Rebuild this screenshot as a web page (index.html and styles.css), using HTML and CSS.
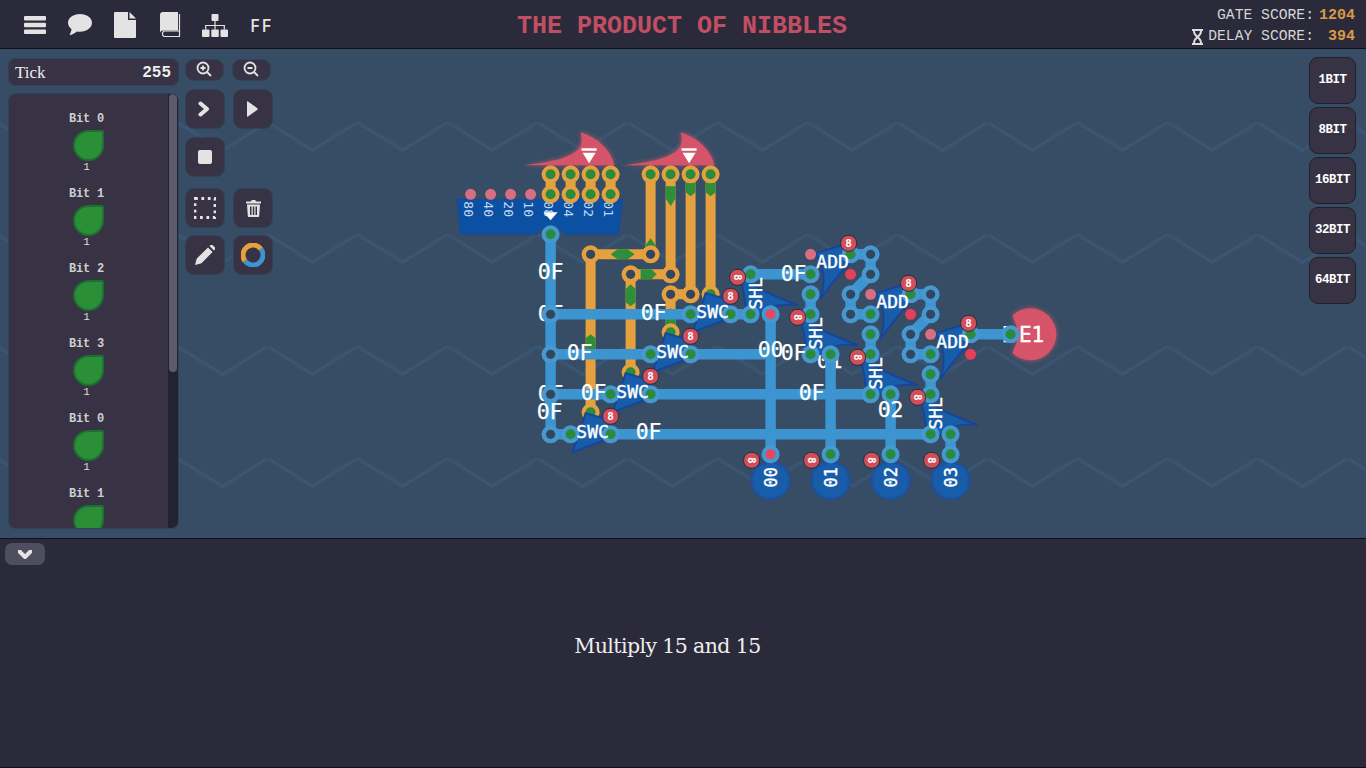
FILE: index.html
```html
<!DOCTYPE html>
<html lang="en">
<head>
<meta charset="utf-8">
<title>The Product of Nibbles</title>
<link rel="stylesheet" href="styles.css">
</head>
<body>
<header class="topbar">
  <nav class="menu">
    <svg class="ic ic-burger" viewBox="0 0 22 18"><rect y="0" width="22" height="4.4" rx="1"/><rect y="6.8" width="22" height="4.4" rx="1"/><rect y="13.6" width="22" height="4.4" rx="1"/></svg>
    <svg class="ic ic-chat" viewBox="0 0 24 22"><path d="M12 0C5.4 0 0 3.9 0 8.8c0 2.5 1.400 4.700 3.500 6.300-.2 2.400-1.200 4.400-2 5.900 2.700-.4 5.500-1.700 7.300-3.600 1 .2 2.100.3 3.200.3 6.600 0 12-3.900 12-8.900S18.600 0 12 0z"/></svg>
    <svg class="ic ic-file" viewBox="0 0 22 26"><path d="M1 0h13v8h8v17a1 1 0 0 1-1 1H1a1 1 0 0 1-1-1V1a1 1 0 0 1 1-1z"/><path d="M15.500 0 22 6.500h-6.500z"/></svg>
    <svg class="ic ic-book" viewBox="0 0 21 26"><path d="M3 0h15v18.500H3a3 3 0 0 0-3 2V3a3 3 0 0 1 3-3z"/><path class="ic-line" d="M19.500 2v22.500H4a3.200 3.200 0 0 1 0-5.500h15.500"/></svg>
    <svg class="ic ic-map" viewBox="0 0 26 23"><rect x="9.500" y="0" width="7" height="7" rx="1"/><rect x="0" y="15.500" width="7.500" height="7.500" rx="1"/><rect x="9.300" y="15.500" width="7.500" height="7.500" rx="1"/><rect x="18.500" y="15.500" width="7.500" height="7.500" rx="1"/><path class="ic-line" d="M13 7v8.500M3.700 15.500v-4h18.600v4"/></svg>
    <span class="ff">FF</span>
  </nav>
  <h1 class="title">THE PRODUCT OF NIBBLES</h1>
  <div class="scores">
    <div class="score-row"><span>GATE SCORE:</span><b class="score-val">1204</b></div>
    <div class="score-row">
      <svg class="ic-glass" viewBox="0 0 11 16"><path d="M0 0h11v2H10c0 3-1.500 4.500-3 6 1.500 1.500 3 3 3 6h1v2H0v-2h1c0-3 1.500-4.500 3-6C2.500 6.500 1 5 1 2H0z"/><path class="glass-in" d="M3 2h5c0 2-1 3-2.500 4.500C4 5 3 4 3 2zM3 14c0-2 1-3 2.500-4.500C7 11 8 12 8 14z"/></svg>
      <span>DELAY SCORE:</span><b class="score-val">&nbsp;394</b>
    </div>
  </div>
</header>

<main class="stage">
  <svg class="canvas" viewBox="-0.6 48.7 1366 489" aria-label="circuit">
    <defs>
      <pattern id="zig" patternUnits="userSpaceOnUse" width="90" height="112" x="-3" y="10">
        <path class="zig-line" d="M-45 28 0 0 45 28 90 0 135 28"/>
      </pattern>
      <filter id="glow" x="-30%" y="-30%" width="160%" height="160%"><feGaussianBlur stdDeviation="2.500"/></filter>
      <g id="o-h"><circle r="9" class="ring-o"/><circle r="4.600" class="hole"/></g>
      <g id="o-g"><circle r="9" class="ring-o"/><circle r="5" class="pin-g"/></g>
      <g id="b-h"><circle r="9" class="ring-b"/><circle r="4.600" class="hole"/></g>
      <g id="b-g"><circle r="9" class="ring-b"/><circle r="5" class="pin-g"/></g>
      <g id="b-r"><circle r="9" class="ring-b"/><circle r="5" class="pin-r"/></g>
      <g id="badge8"><rect x="-8" y="-8" width="16" height="16" rx="7.500" class="badge"/><text class="badge-t" y="3.500">8</text></g>
      <g id="badgei"><rect x="-8" y="-8" width="16" height="16" rx="7.500" class="badge"/><text class="badge-t" y="3.500" transform="rotate(90)">8</text></g>
      <path id="swc" class="gate" d="M-20 20-7-19 18-12 20 5Z"/>
      <path id="shl" class="gate" d="M-12-40Q0-27 47-9 20-12 12 0L-4 0Q-6-24-12-40Z"/>
      <path id="add" class="gate" d="M16-19-17-9Q-4 10-12 37 8 8 22-3Z"/>
      <path id="cone" class="pink" d="M0 33C28 30 50 26 58 14 60 8 59 4 58 0 76 6 88 18 92 33Z"/>
      <path id="out" class="gate soft" d="M-13-8A19 19 0 1 0 13-8L0-14Z"/>
    </defs>
    <rect x="-1" y="48" width="1368" height="491" fill="url(#zig)" class="bg"/>

    <!-- labels that lie under the wires -->
    <g class="lbl">
      <text x="550" y="321">0F</text><text x="550" y="401">0F</text><text x="829" y="368">01</text><text x="1014" y="342">E1</text>
    </g>

    <!-- orange wires -->
    <g class="w-o">
      <path d="M550 174v20M570 174v20M590 174v20M610 174v20"/>
      <path d="M650 174v80H590V412"/>
      <path d="M670 174v100H630V372"/>
      <path d="M690 174V294H670V332"/>
      <path d="M710 174V294"/>
    </g>
    <g class="w-g">
      <path d="M610 254 617 249H627L634 254 627 259H617Z"/>
      <path d="M640 269H651L656 274 651 279H640Z"/>
      <path d="M630 284 635 289V302L630 306 625 302V289Z"/>
      <path d="M665 186H675V198L670 206 665 198Z"/>
      <path d="M685 182H695V192L690 196 685 192Z"/>
      <path d="M705 182H715V192L710 196 705 192Z"/>
      <path d="M645 245 650 238 655 245V250H645Z"/>
      <path d="M665 312 670 308 675 312V328H665Z"/>
      <path d="M585 338 590 334 595 338V352H585Z"/>
    </g>

    <!-- blue wires -->
    <g class="w-b">
      <path d="M550 234V434H570"/>
      <path d="M550 314H690M550 354H650M550 394H610"/>
      <path d="M690 354H770M650 394H870M610 434H930"/>
      <path d="M730 314H750M770 314V454M830 354V454M890 394V454M950 434V454"/>
      <path d="M750 274H810M810 294V314"/>
      <path d="M850 254H870V274L850 294V314H870M870 334V354"/>
      <path d="M910 294H930V314L910 334V354H930M930 374V394"/>
      <path d="M970 334H1010"/>
    </g>

    <!-- splitter -->
    <path class="split" d="M456 199H622L618 234H564Q558 226 550 226 542 226 536 234H460Z"/>
    <g class="pink-dot"><circle cx="470" cy="194" r="5.500"/><circle cx="490" cy="194" r="5.500"/><circle cx="510" cy="194" r="5.500"/><circle cx="530" cy="194" r="5.500"/></g>
    <g class="split-t">
      <text transform="translate(463 201) rotate(90)">80</text>
      <text transform="translate(483 201) rotate(90)">40</text>
      <text transform="translate(503 201) rotate(90)">20</text>
      <text transform="translate(523 201) rotate(90)">10</text>
      <text transform="translate(543 201) rotate(90)">08</text>
      <text transform="translate(563 201) rotate(90)">04</text>
      <text transform="translate(583 201) rotate(90)">02</text>
      <text transform="translate(603 201) rotate(90)">01</text>
    </g>
    <path class="arrow" d="M543 212H557L550 220Z"/>

    <!-- pink input cones -->
    <use href="#cone" x="522" y="132" class="cone-glow"/><use href="#cone" x="622" y="132" class="cone-glow"/>
    <use href="#cone" x="522" y="132"/><use href="#cone" x="622" y="132"/>
    <g class="arrow"><path d="M581 148H596V150.500H581ZM582 152.500H595L588.500 163ZM681 148H696V150.500H681ZM682 152.500H695L688.500 163Z"/></g>

    <!-- pins that the gates cover in part -->
    <use href="#o-g" x="710" y="294"/><use href="#o-g" x="670" y="332"/><use href="#o-g" x="630" y="372"/><use href="#o-g" x="590" y="412"/>

    <!-- gates -->
    <use href="#swc" x="592" y="432"/><use href="#swc" x="632" y="392"/><use href="#swc" x="672" y="352"/><use href="#swc" x="712" y="312"/>
    <use href="#shl" x="750" y="314"/><use href="#shl" x="810" y="354"/><use href="#shl" x="870" y="394"/><use href="#shl" x="930" y="434"/>
    <use href="#add" x="832" y="262"/><use href="#add" x="892" y="302"/><use href="#add" x="952" y="342"/>
    <use href="#out" x="770" y="474"/><use href="#out" x="830" y="474"/><use href="#out" x="890" y="474"/><use href="#out" x="950" y="474"/>

    <!-- output -->
    <path class="pink cone-glow" d="M1012 315A26 26 0 1 1 1012 353L1019 334Z"/>
    <path class="pink" d="M1012 315A26 26 0 1 1 1012 353L1019 334Z"/>

    <!-- pins -->
    <use href="#o-g" x="550" y="174"/><use href="#o-g" x="570" y="174"/><use href="#o-g" x="590" y="174"/><use href="#o-g" x="610" y="174"/>
    <use href="#o-g" x="550" y="194"/><use href="#o-g" x="570" y="194"/><use href="#o-g" x="590" y="194"/><use href="#o-g" x="610" y="194"/>
    <use href="#o-g" x="650" y="174"/><use href="#o-g" x="670" y="174"/><use href="#o-g" x="690" y="174"/><use href="#o-g" x="710" y="174"/>
    <use href="#o-h" x="590" y="254"/><use href="#o-h" x="650" y="254"/><use href="#o-h" x="630" y="274"/><use href="#o-h" x="670" y="274"/><use href="#o-h" x="670" y="294"/><use href="#o-h" x="690" y="294"/>

    <use href="#b-g" x="550" y="234"/><use href="#b-h" x="550" y="314"/><use href="#b-h" x="550" y="354"/><use href="#b-h" x="550" y="394"/><use href="#b-h" x="550" y="434"/>
    <use href="#b-g" x="570" y="434"/><use href="#b-g" x="610" y="434"/><use href="#b-g" x="610" y="394"/><use href="#b-g" x="650" y="394"/><use href="#b-g" x="650" y="354"/><use href="#b-g" x="690" y="354"/><use href="#b-g" x="690" y="314"/><use href="#b-g" x="730" y="314"/>
    <use href="#b-g" x="750" y="314"/><use href="#b-r" x="770" y="314"/><use href="#b-g" x="750" y="274"/><use href="#b-g" x="810" y="274"/><use href="#b-g" x="810" y="294"/><use href="#b-g" x="810" y="314"/><use href="#b-g" x="810" y="354"/><use href="#b-g" x="830" y="354"/>
    <use href="#b-g" x="850" y="254"/><use href="#b-h" x="870" y="254"/><use href="#b-h" x="870" y="274"/><use href="#b-h" x="850" y="294"/><use href="#b-h" x="850" y="314"/><use href="#b-g" x="870" y="314"/><use href="#b-g" x="870" y="334"/><use href="#b-g" x="870" y="354"/><use href="#b-g" x="870" y="394"/><use href="#b-g" x="890" y="394"/>
    <use href="#b-g" x="910" y="294"/><use href="#b-h" x="930" y="294"/><use href="#b-h" x="930" y="314"/><use href="#b-h" x="910" y="334"/><use href="#b-h" x="910" y="354"/><use href="#b-g" x="930" y="354"/><use href="#b-g" x="930" y="374"/><use href="#b-g" x="930" y="394"/><use href="#b-g" x="930" y="434"/><use href="#b-g" x="950" y="434"/>
    <use href="#b-r" x="770" y="454"/><use href="#b-g" x="830" y="454"/><use href="#b-g" x="890" y="454"/><use href="#b-g" x="950" y="454"/>
    <use href="#b-g" x="970" y="334"/><use href="#b-g" x="1010" y="334"/>

    <!-- small input dots -->
    <g class="pink-dot"><circle cx="810" cy="254" r="5.500"/><circle cx="870" cy="294" r="5.500"/><circle cx="930" cy="334" r="5.500"/></g>
    <g class="red-dot"><circle cx="850" cy="274" r="5.500"/><circle cx="910" cy="314" r="5.500"/><circle cx="970" cy="354" r="5.500"/></g>

    <!-- labels on top -->
    <g class="lbl">
      <text x="550" y="279">0F</text><text x="653" y="320">0F</text><text x="579" y="360">0F</text><text x="770" y="357">00</text><text x="793" y="360">0F</text><text x="593" y="400">0F</text><text x="811" y="400">0F</text><text x="549" y="419">0F</text><text x="648" y="439">0F</text><text x="793" y="281">0F</text><text x="890" y="417">02</text>
    </g>
    <g class="gate-t">
      <text x="592" y="438">SWC</text><text x="632" y="398">SWC</text><text x="672" y="358">SWC</text><text x="712" y="318">SWC</text>
      <text x="832" y="268">ADD</text><text x="892" y="308">ADD</text><text x="952" y="348">ADD</text>
      <text transform="translate(761 293) rotate(-90)">SHL</text><text transform="translate(821 333) rotate(-90)">SHL</text><text transform="translate(881 373) rotate(-90)">SHL</text><text transform="translate(941 413) rotate(-90)">SHL</text>
    </g>
    <g class="gate-t small">
      <text transform="translate(776 477) rotate(-90)">00</text><text transform="translate(836 477) rotate(-90)">01</text><text transform="translate(896 477) rotate(-90)">02</text><text transform="translate(956 477) rotate(-90)">03</text>
    </g>
    <text class="out-t" x="1031" y="342">E1</text>

    <!-- badges -->
    <use href="#badge8" x="610" y="416"/><use href="#badge8" x="650" y="376"/><use href="#badge8" x="690" y="336"/><use href="#badge8" x="730" y="296"/>
    <use href="#badge8" x="848" y="243"/><use href="#badge8" x="908" y="283"/><use href="#badge8" x="968" y="323"/>
    <use href="#badgei" x="737" y="277"/><use href="#badgei" x="797" y="317"/><use href="#badgei" x="857" y="357"/><use href="#badgei" x="917" y="397"/>
    <use href="#badgei" x="751" y="460"/><use href="#badgei" x="811" y="460"/><use href="#badgei" x="871" y="460"/><use href="#badgei" x="931" y="460"/>
  </svg>

  <aside class="side">
    <div class="tick"><span class="tick-l">Tick</span><b class="tick-v">255</b></div>
    <div class="bits">
      <div class="bits-list">
        <div class="bit"><span class="bit-n">Bit 0</span><i class="leaf"></i><span class="bit-v">1</span></div>
        <div class="bit"><span class="bit-n">Bit 1</span><i class="leaf"></i><span class="bit-v">1</span></div>
        <div class="bit"><span class="bit-n">Bit 2</span><i class="leaf"></i><span class="bit-v">1</span></div>
        <div class="bit"><span class="bit-n">Bit 3</span><i class="leaf"></i><span class="bit-v">1</span></div>
        <div class="bit"><span class="bit-n">Bit 0</span><i class="leaf"></i><span class="bit-v">1</span></div>
        <div class="bit"><span class="bit-n">Bit 1</span><i class="leaf"></i></div>
      </div>
      <div class="scroll"><div class="thumb"></div></div>
    </div>
  </aside>

  <div class="tools">
    <div class="tool-row zoom-row">
      <button class="btn zoom"><svg viewBox="0 0 16 16"><circle cx="7" cy="7" r="5.500" class="st"/><path class="st" d="M11 11l4 4M4.500 7h5M7 4.500v5"/></svg></button>
      <button class="btn zoom"><svg viewBox="0 0 16 16"><circle cx="7" cy="7" r="5.500" class="st"/><path class="st" d="M11 11l4 4M4.500 7h5"/></svg></button>
    </div>
    <div class="tool-row">
      <button class="btn"><svg viewBox="0 0 14 16" class="i16 nudge-l"><path class="st thick" d="M3.500 2.500 10 8l-6.500 5.500"/></svg></button>
      <button class="btn"><svg viewBox="0 0 14 16" class="i16 nudge-l"><path d="M2 0.500Q2 0 3 .5L12 7a1.200 1.200 0 0 1 0 2L3 15.500Q2 16 2 15z"/></svg></button>
    </div>
    <div class="tool-row"><button class="btn"><i class="stop"></i></button></div>
    <div class="tool-row gap-big">
      <button class="btn"><svg viewBox="0 0 22 22" class="i22"><path class="st dots" d="M1 1.500H21V20.500H1Z"/></svg></button>
      <button class="btn"><svg viewBox="0 0 15 18" class="i18"><path d="M0 2.500h5l.7-1.500h3.600l.7 1.500h5V4.500H0zM1 5.500h13l-.8 11.500a1 1 0 0 1-1 1H2.800a1 1 0 0 1-1-1zM4 7.500v8.500h1.500V7.500zM6.800 7.500v8.500h1.500V7.500zM9.500 7.500v8.500H11V7.500z" fill-rule="evenodd"/></svg></button>
    </div>
    <div class="tool-row">
      <button class="btn"><svg viewBox="0 0 20 20" class="i20"><path d="M0 20l1.800-6.500L13 2.400 17.600 7 6.500 18.200zM14.500 1l1-1a1.500 1.500 0 0 1 2 0l2.500 2.500a1.500 1.500 0 0 1 0 2L19 5.500z"/></svg></button>
      <button class="btn"><svg viewBox="0 0 24 24" class="i24"><path class="ring1" d="M4 18A10 10 0 0 1 20 6"/><path class="ring2" d="M20 6A10 10 0 0 1 4 18"/></svg></button>
    </div>
  </div>

  <div class="widths">
    <button class="wbtn">1BIT</button>
    <button class="wbtn">8BIT</button>
    <button class="wbtn">16BIT</button>
    <button class="wbtn">32BIT</button>
    <button class="wbtn">64BIT</button>
  </div>
</main>

<section class="desc">
  <button class="collapse"><svg viewBox="0 0 14 9"><path class="st thick" d="M1.500 1.500 7 7l5.500-5.500"/></svg></button>
  <p class="desc-t">Multiply 15 and 15</p>
</section>
</body>
</html>
```

FILE: styles.css
```css
* { box-sizing: border-box; }
html, body { margin: 0; height: 100%; }
body { width: 1366px; height: 768px; overflow: hidden; background: #2b2a3a; display: flex; flex-direction: column; font-family: "Liberation Mono", monospace; }

.topbar { height: 49px; flex: none; background: #2b2a3a; border-bottom: 1px solid #0f1017; position: relative; display: flex; align-items: center; justify-content: space-between; padding: 0 11px 0 24px; }
.menu { display: flex; align-items: center; fill: #e3e3e3; margin-top: 2px; }
.ic { display: block; flex: none; }
.ic-burger { width: 22px; height: 18px; margin-right: 22px; }
.ic-chat { width: 24px; height: 22px; margin-right: 22px; margin-top: -1px; }
.ic-file { width: 22px; height: 26px; margin-right: 24px; }
.ic-book { width: 21px; height: 26px; margin-right: 21px; }
.ic-map { width: 26px; height: 23px; margin-right: 22px; }
.ic-line { fill: none; stroke: #e3e3e3; stroke-width: 1.200; }
.ff { font: 500 18px "Noto Sans", sans-serif; color: #e3e3e3; letter-spacing: 2px; }
.title { position: absolute; left: 517px; top: 12px; margin: 0; font: bold 25px/30px "Liberation Mono", monospace; color: #c14f63; white-space: nowrap; }
.scores { display: flex; flex-direction: column; align-items: flex-end; font-size: 14.700px; line-height: 21px; color: #d6d6d6; margin-top: 4px; }
.score-row { display: flex; align-items: center; }
.score-val { color: #d89a45; margin-left: 5px; font-size: 15px; font-weight: bold; }
.ic-glass { width: 11px; height: 16px; fill: #dcdcdc; margin-right: 5px; }
.glass-in { fill: #2b2a3a; }

.stage { height: 490px; flex: none; position: relative; display: flex; align-items: flex-start; border-bottom: 1px solid #0f1017; padding-left: 9px; overflow: hidden; }
.canvas { position: absolute; left: 0; top: 0; width: 1366px; height: 489px; background: #364d65; }
.zig-line { fill: none; stroke: #3b5573; stroke-width: 3; }

.w-o path { fill: none; stroke: #e5a03f; stroke-width: 10; }
.w-g path { fill: #2f8e3a; }
.w-b path { fill: none; stroke: #3c95d0; stroke-width: 10.500; }
.ring-o { fill: #e5a03f; }
.ring-b { fill: #4598d0; }
.hole { fill: #33465f; }
.pin-g { fill: #2b8a3c; }
.pin-r { fill: #e8485f; }
.split { fill: #0c50a3; stroke: #174a9a; }
.split-t text { font: 13px "DejaVu Sans Mono", monospace; fill: #c4daf0; }
.arrow { fill: #fff; }
.pink { fill: #d55469; }
.pink-dot circle { fill: #d86e81; }
.red-dot circle { fill: #e5405a; }
.cone-glow { filter: url(#glow); opacity: .8; }
.gate { fill: #175da9; stroke: #17459a; stroke-width: 2; }
.gate.soft { stroke: #1f4f9d; stroke-opacity: .7; stroke-width: 3; }
.lbl text { font: 21.500px "DejaVu Sans Mono", monospace; fill: #fff; text-anchor: middle; stroke: #fff; stroke-width: .25; }
.gate-t text, .out-t { font: 18px "DejaVu Sans Mono", monospace; fill: #fff; text-anchor: middle; stroke: #fff; stroke-width: .4; }
.gate-t.small text { font-size: 17px; }
.out-t { font-size: 21px; }
.badge { fill: #d04f5b; stroke: #2b2a3a; stroke-width: 1; }
.badge-t { font: bold 11px "DejaVu Sans Mono", monospace; fill: #fff; text-anchor: middle; }

.side { position: relative; width: 169px; padding-top: 10px; height: 479px; display: flex; flex-direction: column; gap: 9px; flex: none; }
.tick { height: 26px; background: #373344; border-radius: 7px; box-shadow: 0 0 0 1px #2e4258; display: flex; align-items: center; justify-content: space-between; padding: 2px 7px 0 6px; color: #eee; }
.tick-l { font: 17px "Liberation Serif", serif; }
.tick-v { font: bold 16px "Liberation Mono", monospace; }
.bits { flex: 1; min-height: 0; border-radius: 7px; overflow: hidden; background: #373344; box-shadow: 0 0 0 1px #2e4258; position: relative; display: flex; }
.bits-list { flex: 1; display: flex; flex-direction: column; align-items: center; padding-top: 18px; overflow: hidden; }
.bit { flex: none; height: 75px; display: flex; flex-direction: column; align-items: center; padding-right: 2px; }
.bit-n { font: bold 12px/13px "Liberation Mono", monospace; color: #cfcfcf; letter-spacing: -.2px; margin: 1px 2px 0 0; }
.leaf { display: block; width: 31px; height: 31px; margin: 4px 0 0 2px; background: #2a8f37; border: 2px solid #1e6f31; border-radius: 50% 2px 50% 50%; }
.bit-v { font: 11px/13px "Liberation Mono", monospace; color: #ddd; margin: 0 2px 0 0; }
.scroll { width: 10px; flex: none; background: #232230; }
.thumb { height: 278px; width: 8px; margin: 0 1px; background: #5d5b69; border-radius: 4px; }

.tools { position: relative; margin-left: 7px; padding-top: 10px; display: flex; flex-direction: column; gap: 8px; flex: none; }
.tool-row { display: flex; gap: 8px; }
.gap-big { margin-top: 3px; }
.zoom-row { height: 22px; }
.tool-row:nth-child(5) { margin-top: -1px; }
.btn { width: 40px; height: 40px; padding: 0; border: 1px solid #2e4258; border-radius: 9px; background: #373344; display: flex; align-items: center; justify-content: center; fill: #e3e3e3; }
.btn.zoom { height: 22px; width: 39px; }
.btn.zoom svg { width: 16px; height: 16px; margin: 0 2px 2px 0; }
.st { fill: none; stroke: #e3e3e3; stroke-width: 1.800; }
.st.thick { stroke-width: 4; stroke-linecap: round; stroke-linejoin: round; }
.st.dots { stroke-width: 2.800; stroke-dasharray: 2.800 3.600; }
.i16 { width: 14px; height: 16px; }
.nudge-l { margin-right: 2px; }
.i18 { width: 15px; height: 18px; }
.i20 { width: 20px; height: 20px; }
.i22 { width: 22px; height: 22px; }
.i24 { width: 24px; height: 24px; }
.stop { width: 14px; height: 14px; background: #e3e3e3; border-radius: 2px; display: block; }
.ring1, .ring2 { fill: none; stroke-width: 5; }
.ring1 { stroke: #e5a03f; }
.ring2 { stroke: #3c95d0; }

.widths { position: relative; margin-left: auto; padding: 8px 10px 0 0; display: flex; flex-direction: column; gap: 3px; flex: none; }
.wbtn { width: 47px; height: 47px; padding: 0 0 2px; border: 1px solid #20202c; border-radius: 9px; background: #373344; color: #fff; font: bold 12.500px "Liberation Mono", monospace; letter-spacing: -.5px; }

.desc { flex: 1; background: #2b2a3a; position: relative; border-bottom: 1px solid #111; display: flex; align-items: flex-start; justify-content: center; padding: 92px 31px 0 0; }
.collapse { position: absolute; left: 5px; top: 4px; width: 40px; height: 22px; padding: 0; border: 0; border-radius: 7px; background: #4f4d60; display: flex; align-items: center; justify-content: center; }
.collapse svg { width: 14px; height: 9px; }
.desc-t { margin: 0; font: 20.500px/30px "DejaVu Serif", serif; letter-spacing: -.6px; color: #eee; }
```
